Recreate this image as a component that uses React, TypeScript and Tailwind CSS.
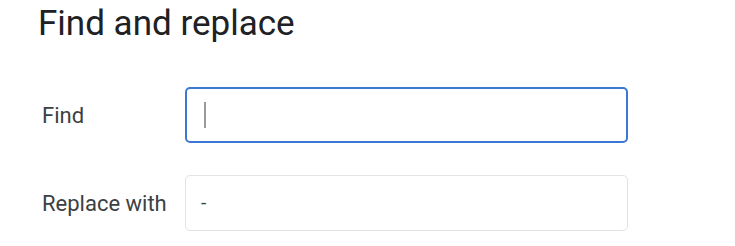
export default function App() {
  return (
    <div className="w-[735px] h-[246px] bg-white overflow-hidden" style={{ fontFamily: "Roboto, 'Liberation Sans', sans-serif" }}>
      <div className="pl-[38px] pt-[2px]">
        <h1 className="text-[35px] leading-[44px] text-[#202124]">Find and replace</h1>
      </div>
      <div className="mt-[41px] pl-[42px] flex flex-col gap-[32px]">
        <div className="flex items-center">
          <label className="w-[143px] text-[22px] text-[#3c4043]">Find</label>
          <div className="w-[443px] h-[56px] rounded-[5px] border-2 border-[#3b78d4] flex items-center pl-[17px]">
            <div className="w-[2px] h-[26px] bg-[#9a9a9a]" />
          </div>
        </div>
        <div className="flex items-center">
          <label className="w-[143px] text-[22px] text-[#3c4043]">Replace with</label>
          <div className="w-[443px] h-[56px] rounded-[5px] border border-[#e3e3e3] flex items-center pl-[15px] text-[19px] text-[#3c4043]">
            -
          </div>
        </div>
      </div>
    </div>
  );
}
